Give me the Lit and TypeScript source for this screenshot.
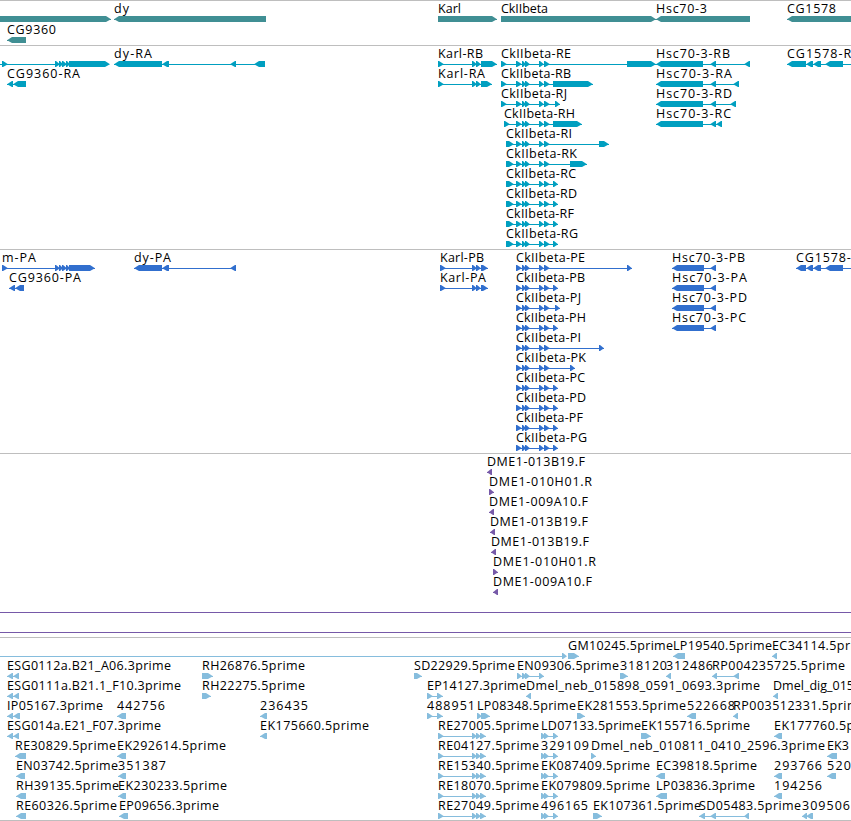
import { LitElement, html, svg, css } from 'lit';
import { customElement, property } from 'lit/decorators.js';

type Span = [number, number];

interface Feature {
  row: number;
  x: number;
  label?: string;
  // label width in px
  width?: number;
  dir: 'left' | 'right';
  spans: Span[];
  // connector line, when it reaches further than the spans
  line?: Span;
}

interface Track {
  name: string;
  color: string;
  height: number;
  pitch: number;
  features: Feature[];
}

const L = 'left' as const;
const R = 'right' as const;

const f = (
  row: number,
  x: number,
  label: string,
  width: number,
  dir: 'left' | 'right',
  spans: Span[],
  line?: Span,
): Feature => ({ row, x, label, width, dir, spans, line });

// exons shared by several transcripts
const ckCore: Span[] = [[516, 522], [522, 526], [525, 530], [539, 544], [544, 550]];
const karlCore: Span[] = [[472, 477], [476, 481]];
const mCore: Span[] = [[2, 8], [55, 60], [59, 63], [62, 67], [66, 70]];
const cgCore: Span[] = [[806, 813], [813, 821], [825, 843]];
const reads: Span[] = [[438, 444], ...karlCore, [480, 486]];
const ckReads: Span[] = [[541, 546], [544, 549], [553, 558]];
const esg: Span[] = [[7, 13], [13, 19]];

const genes: Feature[] = [
  f(0, -10, '', 0, R, [[-10, 111]]),
  f(0, 114, 'dy', 15, L, [[114, 266]]),
  f(0, 438, 'Karl', 23, R, [[438, 497]]),
  f(0, 501, 'CkIIbeta', 47, R, [[501, 656]]),
  f(0, 656, 'Hsc70-3', 51, L, [[656, 750]]),
  f(0, 787, 'CG1578', 49, L, [[787, 870]]),
  f(1, 7, 'CG9360', 49, L, [[7, 26]]),
];

const transcripts: Feature[] = [
  f(0, -10, '', 0, R, [...mCore, [69, 110]], [-10, 100]),
  f(0, 114, 'dy-RA', 38, L, [[114, 162], [162, 169], [230, 236], [254, 265]]),
  f(1, 7, 'CG9360-RA', 73, L, [[7, 13], [13, 26]]),
  f(0, 438, 'Karl-RB', 45, R, [[438, 444], ...karlCore, [481, 497]]),
  f(1, 438, 'Karl-RA', 47, R, [[438, 444], ...karlCore, [481, 492]]),
  f(0, 501, 'CkIIbeta-RE', 70, R, [[501, 507], ...ckCore, [627, 656]]),
  f(1, 501, 'CkIIbeta-RB', 70, R, [[501, 507], ...ckCore, [553, 593]]),
  f(2, 501, 'CkIIbeta-RJ', 66, R, [[501, 507], ...ckCore, [555, 560]]),
  f(3, 504, 'CkIIbeta-RH', 71, R, [[504, 510], ...ckCore, [553, 582]]),
  f(4, 506, 'CkIIbeta-RI', 66, R, [[506, 514], ...ckCore, [599, 609]]),
  f(5, 506, 'CkIIbeta-RK', 71, R, [[506, 514], ...ckCore, [570, 587]]),
  f(6, 506, 'CkIIbeta-RC', 70, R, [[506, 514], ...ckCore, [553, 558]]),
  f(7, 506, 'CkIIbeta-RD', 71, R, [[506, 514], ...ckCore, [553, 558]]),
  f(8, 506, 'CkIIbeta-RF', 68, R, [[506, 514], ...ckCore, [553, 558]]),
  f(9, 506, 'CkIIbeta-RG', 72, R, [[506, 514], ...ckCore, [553, 558]]),
  f(0, 656, 'Hsc70-3-RB', 74, L, [[656, 703], [710, 716], [744, 750]]),
  f(1, 656, 'Hsc70-3-RA', 76, L, [[656, 703], [710, 716], [733, 739]]),
  f(2, 656, 'Hsc70-3-RD', 76, L, [[656, 703], [710, 716], [730, 736]]),
  f(3, 656, 'Hsc70-3-RC', 75, L, [[656, 703], [710, 716], [716, 722]]),
  f(0, 787, 'CG1578-RA', 73, L, [[787, 806], ...cgCore], [787, 870]),
];

const proteins: Feature[] = [
  f(0, 2, 'm-PA', 34, R, [...mCore, [69, 95]]),
  f(1, 9, 'CG9360-PA', 72, L, [[9, 15], [15, 24]]),
  f(0, 134, 'dy-PA', 37, L, [[134, 162], [162, 169], [230, 236]]),
  f(0, 440, 'Karl-PB', 44, R, [[440, 446], ...karlCore, [481, 488]]),
  f(1, 440, 'Karl-PA', 46, R, [[440, 446], ...karlCore, [481, 488]]),
  f(0, 516, 'CkIIbeta-PE', 69, R, [...ckCore, [627, 632]]),
  f(1, 516, 'CkIIbeta-PB', 69, R, [...ckCore, [553, 558]]),
  f(2, 516, 'CkIIbeta-PJ', 65, R, [...ckCore, [555, 560]]),
  f(3, 516, 'CkIIbeta-PH', 70, R, [...ckCore, [553, 558]]),
  f(4, 516, 'CkIIbeta-PI', 65, R, [...ckCore, [599, 604]]),
  f(5, 516, 'CkIIbeta-PK', 70, R, [...ckCore, [570, 575]]),
  f(6, 516, 'CkIIbeta-PC', 69, R, [...ckCore, [553, 558]]),
  f(7, 516, 'CkIIbeta-PD', 70, R, [...ckCore, [553, 558]]),
  f(8, 516, 'CkIIbeta-PF', 67, R, [...ckCore, [553, 558]]),
  f(9, 516, 'CkIIbeta-PG', 71, R, [...ckCore, [553, 558]]),
  f(0, 672, 'Hsc70-3-PB', 73, L, [[672, 704], [710, 716]]),
  f(1, 672, 'Hsc70-3-PA', 75, L, [[672, 704], [710, 716]]),
  f(2, 672, 'Hsc70-3-PD', 75, L, [[672, 704], [710, 716]]),
  f(3, 672, 'Hsc70-3-PC', 74, L, [[672, 704], [710, 716]]),
  f(0, 796, 'CG1578-PA', 72, L, [[796, 806], ...cgCore], [796, 870]),
];

const clones: Feature[] = [
  f(0, 487, 'DME1-013B19.F', 98, L, [[487, 492]]),
  f(1, 489, 'DME1-010H01.R', 103, R, [[489, 494]]),
  f(2, 489, 'DME1-009A10.F', 99, L, [[489, 494]]),
  f(3, 490, 'DME1-013B19.F', 98, L, [[490, 495]]),
  f(4, 491, 'DME1-013B19.F', 98, L, [[491, 496]]),
  f(5, 493, 'DME1-010H01.R', 103, R, [[493, 498]]),
  f(6, 493, 'DME1-009A10.F', 99, L, [[493, 498]]),
  f(7, -10, '', 0, R, [], [-10, 870]),
  f(8, -10, '', 0, R, [], [-10, 870]),
];

const ests: Feature[] = [
  f(0, -10, '', 0, R, [[562, 567]], [-10, 566]),
  f(0, 568, 'GM10245.5prime', 105, R, [[568, 579]]),
  f(0, 673, 'LP19540.5prime', 99, L, [[673, 685]]),
  f(0, 772, 'EC34114.5prime', 101, L, [[772, 777]]),

  f(1, 7, 'ESG0112a.B21_A06.3prime', 164, L, esg),
  f(1, 202, 'RH26876.5prime', 103, R, [[202, 213]]),
  f(1, 414, 'SD22929.5prime', 101, R, [[414, 422]]),
  f(1, 517, 'EN09306.5prime', 102, R, [[517, 522], [522, 527], [525, 530], [539, 544]]),
  f(1, 620, '318120', 47, R, [[620, 628]]),
  f(1, 666, '312486', 47, L, [[666, 671]]),
  f(1, 712, 'RP004235725.5prime', 133, L, [[712, 717], [733, 739]]),

  f(2, 7, 'ESG0111a.B21.1_F10.3prime', 174, L, esg),
  f(2, 202, 'RH22275.5prime', 103, R, [[202, 211]]),
  f(2, 427, 'EP14127.3prime', 99, R, [[427, 433], [437, 443]]),
  f(2, 526, 'Dmel_neb_015898_0591_0693.3prime', 234, L, [[526, 531]]),
  f(2, 773, 'Dmel_dig_015', 81, L, [[773, 778]]),

  f(3, 7, 'IP05167.3prime', 96, L, [[7, 13], [13, 20]]),
  f(3, 117, '442756', 48, L, [[117, 126]]),
  f(3, 260, '236435', 48, L, [[260, 267]]),
  f(3, 427, '488951', 48, R, [[427, 433], [437, 443]]),
  f(3, 477, 'LP08348.5prime', 99, R, [[477, 482], [481, 490]]),
  f(3, 577, 'EK281553.5prime', 109, R, [[577, 585]]),
  f(3, 687, '522668', 48, L, [[687, 696]]),
  f(3, 733, 'RP003512331.5prime', 133, L, [[733, 738]]),

  f(4, 7, 'ESG014a.E21_F07.3prime', 154, L, esg),
  f(4, 260, 'EK175660.5prime', 109, L, [[260, 267]]),
  f(4, 438, 'RE27005.5prime', 101, R, reads),
  f(4, 541, 'LD07133.5prime', 100, R, ckReads),
  f(4, 641, 'EK155716.5prime', 109, R, [[641, 651]]),
  f(4, 774, 'EK177760.5prime', 109, L, [[774, 782]]),

  f(5, 15, 'RE30829.5prime', 101, L, [[15, 26]]),
  f(5, 117, 'EK292614.5prime', 109, L, [[117, 126]]),
  f(5, 438, 'RE04127.5prime', 101, R, reads),
  f(5, 541, '329109', 48, R, ckReads),
  f(5, 591, 'Dmel_neb_010811_0410_2596.3prime', 234, R, [[591, 596]]),
  f(5, 827, 'EK3', 22, L, [[827, 837]]),

  f(6, 16, 'EN03742.5prime', 102, L, [[16, 25]]),
  f(6, 118, '351387', 48, L, [[118, 126]]),
  f(6, 438, 'RE15340.5prime', 101, R, reads),
  f(6, 541, 'EK087409.5prime', 109, R, ckReads),
  f(6, 656, 'EC39818.5prime', 101, L, [[656, 665]]),
  f(6, 774, '293766', 48, L, [[774, 782]]),
  f(6, 827, '520', 24, L, [[827, 836]]),

  f(7, 16, 'RH39135.5prime', 103, L, [[16, 26]]),
  f(7, 118, 'EK230233.5prime', 109, L, [[118, 126]]),
  f(7, 438, 'RE18070.5prime', 101, R, reads),
  f(7, 541, 'EK079809.5prime', 109, R, ckReads),
  f(7, 656, 'LP03836.3prime', 99, L, [[656, 667]]),
  f(7, 774, '194256', 48, L, [[774, 782]]),

  f(8, 16, 'RE60326.5prime', 101, L, [[16, 26]]),
  f(8, 119, 'EP09656.3prime', 100, L, [[119, 128]]),
  f(8, 438, 'RE27049.5prime', 101, R, reads),
  f(8, 541, '496165', 47, R, ckReads),
  f(8, 593, 'EK107361.5prime', 108, R, [[593, 602]]),
  f(8, 699, 'SD05483.5prime', 102, L, [[699, 705], [710, 716], [744, 749]]),
  f(8, 802, '309506', 48, L, [[802, 807], [806, 813]]),
];

const tracks: Track[] = [
  { name: 'genes', color: '#408f94', height: 44, pitch: 21, features: genes },
  { name: 'transcripts', color: '#009fc0', height: 203, pitch: 20, features: transcripts },
  { name: 'proteins', color: '#316fce', height: 203, pitch: 20, features: proteins },
  { name: 'clones', color: '#7659a8', height: 183, pitch: 20, features: clones },
  { name: 'ests', color: '#86bddd', height: 182, pitch: 20, features: ests },
];

@customElement('genome-track')
export class GenomeTrack extends LitElement {
  static styles = css`
    :host {
      display: block;
      border-top: 1px solid #bebebe;
    }

    svg {
      display: block;
      width: 100%;
      overflow: hidden;
    }

    .connector {
      shape-rendering: crispEdges;
    }

    text {
      font-family: 'Open Sans', 'Noto Sans', sans-serif;
      font-size: 12.5px;
      fill: #000;
    }
  `;

  @property({ attribute: false }) track!: Track;

  private arrow([a, b]: Span, y: number, dir: 'left' | 'right') {
    const head = Math.min(b - a, 6);
    const mid = y + 3.3;
    const bottom = y + 6;
    const points =
      dir === 'right'
        ? `${a},${y} ${b - head + 1},${y} ${b},${mid} ${b - head + 1},${bottom} ${a},${bottom}`
        : `${b},${y} ${a + head - 1},${y} ${a},${mid} ${a + head - 1},${bottom} ${b},${bottom}`;
    return svg`<polygon points=${points}></polygon>`;
  }

  private glyph(feature: Feature) {
    const y = 15 + feature.row * this.track.pitch;
    const [from, to] = feature.line ?? [
      feature.spans[0][0],
      feature.spans[feature.spans.length - 1][1],
    ];
    return svg`
      <rect class="connector" x=${from} y=${y + 3} width=${to - from} height="1"></rect>
      ${feature.spans.map((span) => this.arrow(span, y, feature.dir))}
    `;
  }

  private label(feature: Feature) {
    const y = 12 + feature.row * this.track.pitch;
    return svg`<text x=${feature.x} y=${y} textLength=${feature.width}>${feature.label}</text>`;
  }

  render() {
    const { color, height, features } = this.track;
    return html`
      <svg height=${height}>
        <g fill=${color}>${features.map((item) => this.glyph(item))}</g>
        <g>${features.filter((item) => item.label).map((item) => this.label(item))}</g>
      </svg>
    `;
  }
}

@customElement('app-root')
export class AppRoot extends LitElement {
  static styles = css`
    :host {
      display: block;
      overflow: hidden;
      background: #fff;
    }

    .view {
      display: flex;
      flex-direction: column;
      border-bottom: 1px solid #bebebe;
    }
  `;

  render() {
    return html`
      <div class="view">
        ${tracks.map((track) => html`<genome-track .track=${track}></genome-track>`)}
      </div>
    `;
  }
}

declare global {
  interface HTMLElementTagNameMap {
    'app-root': AppRoot;
    'genome-track': GenomeTrack;
  }
}
